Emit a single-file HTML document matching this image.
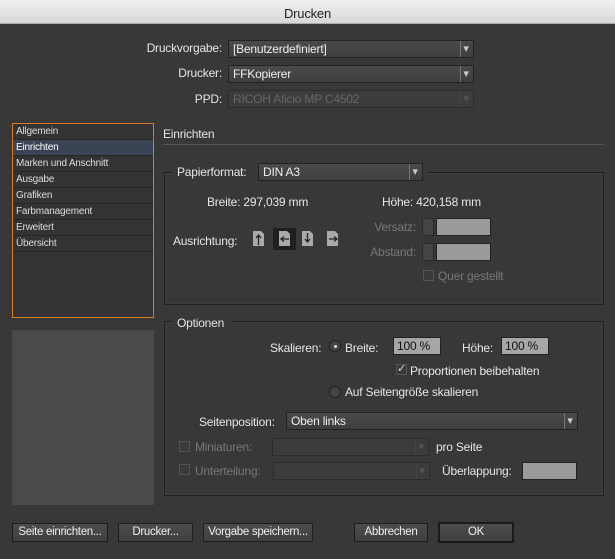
<!DOCTYPE html>
<html><head><meta charset="utf-8"><style>
*{box-sizing:border-box;margin:0;padding:0}
body{width:615px;height:559px;background:#383838;font-family:"Liberation Sans",sans-serif;font-size:12px;letter-spacing:-0.2px;color:#e6e6e6;position:relative;overflow:hidden}
.a{position:absolute;white-space:nowrap}
.title{left:0;top:0;width:615px;height:24px;background:linear-gradient(#f0f0f0,#d8d8d8);border-bottom:1px solid #aaa;color:#222;font-size:13px;text-align:center;line-height:27px}
.sel{position:absolute;height:18px;background:linear-gradient(#4a4a4a,#3e3e3e);border:1px solid #222;color:#eee;padding-left:4px;line-height:16px;font-size:12px;white-space:nowrap}
.sel::after{content:"▾";position:absolute;right:2px;top:0;width:10px;border-left:1px solid #777;text-align:center;color:#ccc;font-size:11px}
.sel.dis{color:#666;background:#3c3c3c;border-color:#2c2c2c}
.sel.dis::after{color:#555;border-color:#444}
.r{text-align:right}
.box{position:absolute;border:1px solid #202020;box-shadow:inset 0 0 0 1px #3e3e3e}
.fld{position:absolute;background:#a6a6a6;border:1px solid #222;color:#111;padding-left:3px;line-height:16px}
.btn{position:absolute;height:19px;top:523px;background:linear-gradient(#4c4c4c,#404040);border:1px solid #1e1e1e;text-align:center;line-height:17px;color:#eee;white-space:nowrap;font-size:11.5px;letter-spacing:-0.3px}
.list div{height:16px;line-height:15px;border-bottom:1px solid #252525;padding-left:3px;font-size:10px;color:#ddd}
.cb{position:absolute;width:11px;height:11px;border:1px solid #555;background:#3a3a3a}
.rd{position:absolute;width:12px;height:12px;border-radius:50%;border:1px solid #222;background:#444}
.dim{color:#777}
</style></head><body>
<div class="a title">Drucken</div>
<div class="a r" style="right:393px;top:41px">Druckvorgabe:</div>
<div class="sel" style="left:228px;top:40px;width:246px">[Benutzerdefiniert]</div>
<div class="a r" style="right:393px;top:66px">Drucker:</div>
<div class="sel" style="left:228px;top:65px;width:246px">FFKopierer</div>
<div class="a r" style="right:393px;top:92px">PPD:</div>
<div class="sel dis" style="left:228px;top:90px;width:246px">RICOH Aficio MP C4502</div>

<div class="a list" style="left:12px;top:123px;width:142px;height:195px;border:1px solid #d87a20;background:#333">
<div>Allgemein</div><div style="background:#3b4454;color:#fff">Einrichten</div><div>Marken und Anschnitt</div><div>Ausgabe</div><div>Grafiken</div><div>Farbmanagement</div><div>Erweitert</div><div>Übersicht</div></div>
<div class="a" style="left:12px;top:330px;width:142px;height:175px;background:#4a4a4a"></div>

<div class="a" style="left:163px;top:127px">Einrichten</div>
<div class="a" style="left:163px;top:144px;width:441px;height:1px;background:#555"></div>

<div class="box" style="left:164px;top:172px;width:440px;height:133px"></div>
<div class="a" style="left:172px;top:164px;width:256px;height:18px;background:#383838"></div>
<div class="a" style="left:177px;top:165px">Papierformat:</div>
<div class="sel" style="left:258px;top:163px;width:165px">DIN A3</div>
<div class="a" style="left:207px;top:195px">Breite: 297,039 mm</div>
<div class="a" style="left:382px;top:195px">Höhe: 420,158 mm</div>
<div class="a" style="left:173px;top:234px">Ausrichtung:</div>
<div class="a" style="left:273px;top:228px;width:23px;height:22px;background:#1f1f1f"></div>
<svg class="a" style="left:250px;top:228px" width="100" height="24" viewBox="0 0 100 24">
<g fill="#aaa"><path d="M3 3h8l3 3v12H3z"/><path d="M29 3h8l3 3v12H29z"/><path d="M52 3h8l3 3v12H52z"/><path d="M77 3h8l3 3v12H77z"/></g>
<g stroke="#222" stroke-width="1.3" fill="none"><path d="M8.5 17V8M6 10l2.5-3 2.5 3"/><path d="M31 11h8M34 8.5l-3 2.5 3 2.5"/><path d="M57.5 5v9M55 11l2.5 3 2.5-3"/><path d="M79 11h8M84 8.5l3 2.5-3 2.5"/></g></svg>
<div class="a r dim" style="right:199px;top:220px">Versatz:</div>
<div class="a" style="left:422px;top:218px;width:12px;height:18px;background:#444;border:1px solid #2a2a2a"></div>
<div class="fld" style="left:436px;top:218px;width:55px;height:18px;background:#9a9a9a"></div>
<div class="a r dim" style="right:199px;top:245px">Abstand:</div>
<div class="a" style="left:422px;top:243px;width:12px;height:18px;background:#444;border:1px solid #2a2a2a"></div>
<div class="fld" style="left:436px;top:243px;width:55px;height:18px;background:#9a9a9a"></div>
<div class="cb" style="left:423px;top:270px"></div>
<div class="a dim" style="left:438px;top:269px">Quer gestellt</div>

<div class="box" style="left:164px;top:321px;width:440px;height:175px"></div>
<div class="a" style="left:172px;top:314px;width:60px;height:14px;background:#383838"></div>
<div class="a" style="left:177px;top:316px">Optionen</div>
<div class="a" style="left:270px;top:341px">Skalieren:</div>
<div class="rd" style="left:329px;top:340px"><div style="position:absolute;left:3.5px;top:3.5px;width:3px;height:3px;border-radius:50%;background:#ddd"></div></div>
<div class="a" style="left:345px;top:341px">Breite:</div>
<div class="fld" style="left:393px;top:337px;width:48px;height:18px">100 %</div>
<div class="a" style="left:462px;top:341px">Höhe:</div>
<div class="fld" style="left:501px;top:337px;width:48px;height:18px">100 %</div>
<div class="cb" style="left:396px;top:364px;color:#ddd;font-size:11px;line-height:9px">✓</div>
<div class="a" style="left:410px;top:364px">Proportionen beibehalten</div>
<div class="rd" style="left:329px;top:386px"></div>
<div class="a" style="left:345px;top:385px">Auf Seitengröße skalieren</div>
<div class="a" style="left:199px;top:415px">Seitenposition:</div>
<div class="sel" style="left:286px;top:412px;width:292px">Oben links</div>
<div class="cb" style="left:179px;top:441px"></div>
<div class="a dim" style="left:195px;top:440px">Miniaturen:</div>
<div class="sel dis" style="left:272px;top:438px;width:157px"></div>
<div class="a" style="left:436px;top:440px">pro Seite</div>
<div class="cb" style="left:179px;top:464px"></div>
<div class="a dim" style="left:195px;top:464px">Unterteilung:</div>
<div class="sel dis" style="left:273px;top:462px;width:157px"></div>
<div class="a" style="left:442px;top:464px">Überlappung:</div>
<div class="fld" style="left:522px;top:462px;width:55px;height:18px;background:#9a9a9a"></div>

<div class="btn" style="left:12px;width:96px">Seite einrichten...</div>
<div class="btn" style="left:118px;width:75px">Drucker...</div>
<div class="btn" style="left:203px;width:110px">Vorgabe speichern...</div>
<div class="btn" style="left:354px;width:74px">Abbrechen</div>
<div class="btn" style="left:438px;width:76px;border:2px solid #1a1a1a;top:522px;height:21px">OK</div>
</body></html>
